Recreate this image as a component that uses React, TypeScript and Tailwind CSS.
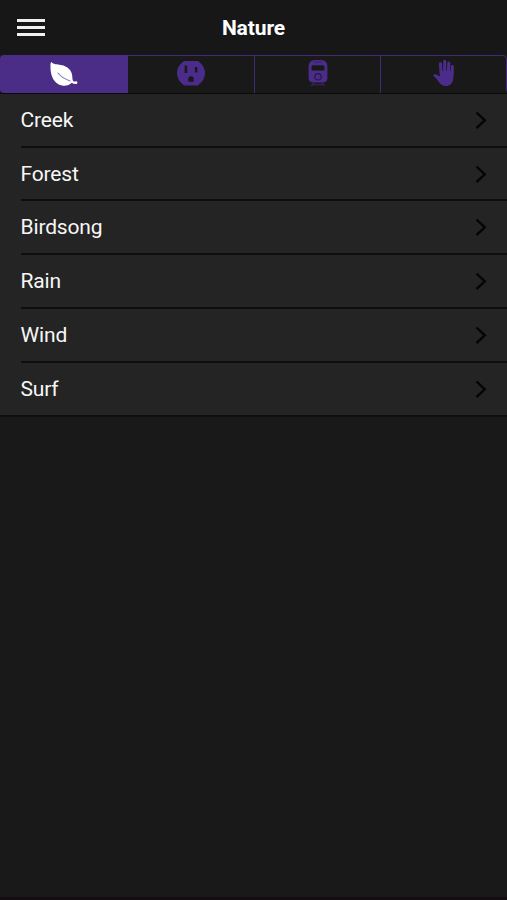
import React from "react";

const LeafIcon = () => (
  <svg className="h-[28px] w-[30px]" viewBox="0 0 30 28">
    <path
      d="M2.2 2 C4.5 4.6 8 4.2 12 4.9 C18.5 6.1 23.2 10.5 23.3 16.5 C23.4 18.6 23.5 20.6 24.6 21.4 L27.8 21.2 C28.8 22 28.4 23.8 27.4 24.1 L24.4 23.7 L22.8 22.8 C19.5 26.3 13.8 26.6 9.4 24.3 C3.4 21 1.3 13 1.5 7 C1.5 5 1.3 3 2.2 2Z"
      fill="#fff"
    />
    <path d="M9 13 C11.5 16.6 16 19 21 21" fill="none" stroke="#8d7bb0" strokeWidth="1.1" strokeLinecap="round" />
  </svg>
);

const OutletIcon = () => (
  <svg className="h-[28px] w-[30px]" viewBox="0 0 30 28" fill="#4b2c8b">
    <path
      fillRule="evenodd"
      d="M8.2 2 H21.8 C25.8 4.6 29 8.8 29 14 C29 19.2 25.8 23.8 21.8 26.4 H8.2 C4.2 23.8 1 19.2 1 14 C1 8.8 4.2 4.6 8.2 2Z M8.6 6.6 V14 H11.2 V6.6Z M18.9 8 V13.5 H21.3 V8Z M12.3 22.8 H17.7 V20 A2.7 2.7 0 0 0 12.3 20Z"
    />
  </svg>
);

const TrainIcon = () => (
  <svg className="h-[28px] w-[22px]" viewBox="0 0 22 28">
    <path
      fill="#4b2c8b"
      fillRule="evenodd"
      d="M7 1 H15 C18.4 1.6 20.4 3.6 20.4 7 V19 C20.4 22 18.4 23.6 15.5 23.6 H6.5 C3.6 23.6 1.6 22 1.6 19 V7 C1.6 3.6 3.6 1.6 7 1Z M6 6.2 C5 6.2 4.6 6.8 4.6 7.6 V11.6 H17.4 V7.6 C17.4 6.8 17 6.2 16 6.2Z"
    />
    <path d="M7 3 H15" stroke="#33215c" strokeWidth="0.9" />
    <circle cx="11" cy="17.8" r="3.2" fill="none" stroke="#24193f" strokeWidth="1.2" />
    <path d="M7 24 L4.3 26.8 M15 24 L17.7 26.8 M6 25.7 H16" stroke="#3b256b" strokeWidth="1.1" />
  </svg>
);

const HandIcon = () => (
  <svg className="h-[28px] w-[24px]" viewBox="0 0 24 28">
    <g fill="none" stroke="#4b2c8b" strokeLinecap="round" strokeWidth="3.1">
      <path d="M9.2 15 L8.4 4.8 M12.7 14 V2.4 M16.3 15 L16.8 4 M19.8 17 L20.4 7.6" />
    </g>
    <path
      fill="#4b2c8b"
      d="M7.7 11.5 L21.6 12 L21.2 20 C20.6 24.6 18 27 14 27 C10.4 27 8.4 25.5 6.6 22.8 C5 20 3.3 18.5 1.7 17.2 C0.9 16.4 1.6 15.2 2.8 15.2 C4.8 15.2 6.3 16.3 8.1 17.5Z"
    />
  </svg>
);

const rows = [
  { label: "Creek", height: "h-[54px]" },
  { label: "Forest", height: "h-[53px]" },
  { label: "Birdsong", height: "h-[54px]" },
  { label: "Rain", height: "h-[54px]" },
  { label: "Wind", height: "h-[54px]" },
  { label: "Surf", height: "h-[52px]" },
];

export default function App() {
  return (
    <div className="flex h-[900px] w-[507px] flex-col overflow-hidden bg-[#191919] font-['Roboto',sans-serif] text-[#f7f7f7]">
      <header className="grid h-[55px] shrink-0 grid-cols-[1fr_auto_1fr] items-center bg-[#171717] px-[17px]">
        <button aria-label="Menu" className="flex w-[28px] flex-col gap-[4px]">
          <span className="h-[3px] w-full bg-[#f0f0f0]" />
          <span className="h-[3px] w-full bg-[#f0f0f0]" />
          <span className="h-[3px] w-full bg-[#f0f0f0]" />
        </button>
        <h1 className="pt-px text-[21px] leading-6 font-bold tracking-[-0.1px] text-white">Nature</h1>
      </header>
      <nav className="flex h-[38px] shrink-0 overflow-hidden rounded-[4px]">
        <button className="flex w-[128px] items-center justify-center bg-[#4b2c86]">
          <LeafIcon />
        </button>
        <button className="flex w-[127px] items-center justify-center border-t border-r border-[#432a77] pb-[3px]">
          <OutletIcon />
        </button>
        <button className="flex w-[126px] items-center justify-center border-t border-r border-[#432a77] pb-[3px]">
          <TrainIcon />
        </button>
        <button className="flex w-[126px] items-center justify-center rounded-tr-[4px] border-t border-r border-[#432a77] pb-[3px]">
          <HandIcon />
        </button>
      </nav>
      <ul className="shrink-0 border-t border-b-2 border-t-[#0b0b0b] border-b-[#0e0e0e] bg-[#242424]">
        {rows.map((row, i) => (
          <li key={row.label} className="pl-[21px]">
            <div
              className={`flex items-center justify-between pr-[20px] ${row.height} ${
                i < rows.length - 1 ? "border-b-2 border-[#0e0e0e]" : ""
              }`}
            >
              <span className="-ml-[0.5px] text-[21px] leading-6 tracking-[-0.15px]">{row.label}</span>
              <svg className="h-[18px] w-[12px]" viewBox="0 0 12 18" fill="none" stroke="#050505" strokeWidth="2.4">
                <path d="M1.5 1.5 L9.8 9.3 L1.5 17" />
              </svg>
            </div>
          </li>
        ))}
      </ul>
      <div className="flex-1" />
      <div className="h-[3px] shrink-0 bg-[#130c10]" />
    </div>
  );
}
